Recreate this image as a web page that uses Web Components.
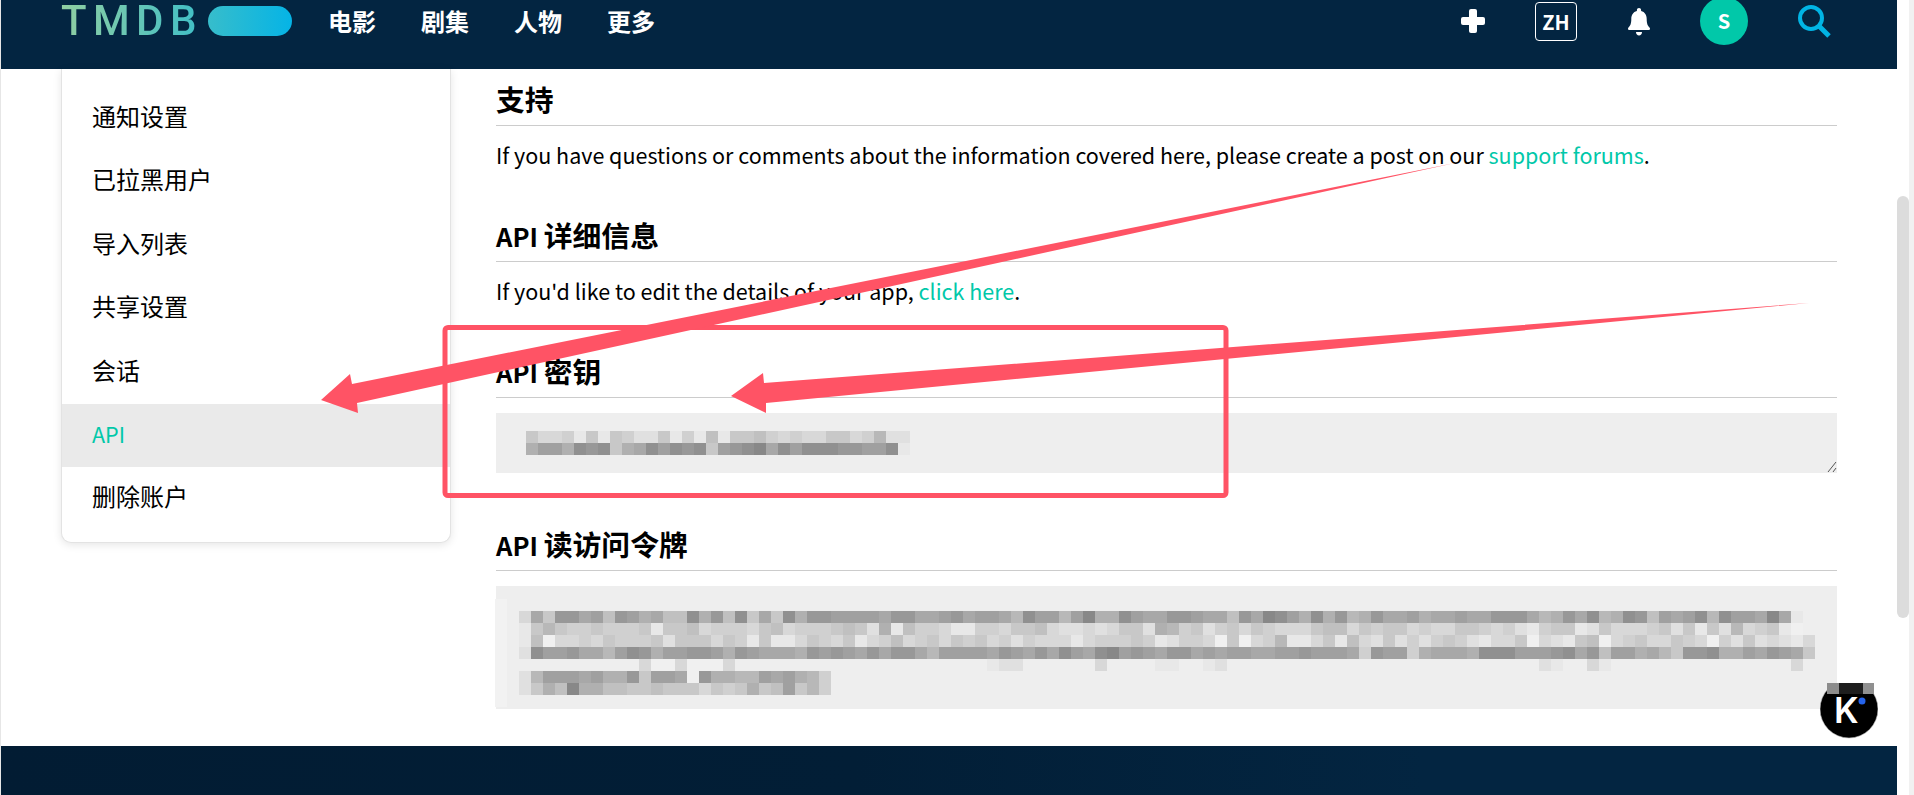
<!DOCTYPE html>
<html lang="zh">
<head>
<meta charset="utf-8">
<title>API</title>
<style>
html, body {
  margin: 0;
  padding: 0;
  height: 100%;
  overflow: hidden;
  background: white;
  font-family: "Noto Sans CJK SC", "Noto Sans", sans-serif;
}
</style>
</head>
<body>
<app-shell>
  <tmdb-header></tmdb-header>
  <page-main>
    <settings-sidebar slot="side">
      <side-item>通知设置</side-item>
      <side-item>已拉黑用户</side-item>
      <side-item>导入列表</side-item>
      <side-item>共享设置</side-item>
      <side-item>会话</side-item>
      <side-item active>API</side-item>
      <side-item>删除账户</side-item>
    </settings-sidebar>
    <api-section title="支持">
      <info-line lang="en">If you have questions or comments about the information covered here, please create a post on our <link-text>support forums</link-text>.</info-line>
    </api-section>
    <api-section title="API 详细信息">
      <info-line lang="en">If you'd like to edit the details of your app, <link-text>click here</link-text>.</info-line>
    </api-section>
    <api-section title="API 密钥">
      <key-box data-h="60" data-kind="key"></key-box>
    </api-section>
    <api-section title="API 读访问令牌">
      <key-box data-h="123" data-kind="token"></key-box>
    </api-section>
  </page-main>
  <page-footer></page-footer>
</app-shell>
<fake-scrollbar></fake-scrollbar>
<kit-badge></kit-badge>
<arrow-layer></arrow-layer>

<script>
const shellTemplate = document.createElement("template");
shellTemplate.innerHTML = `
<style>
:host {
  display: flex;
  flex-direction: column;
  position: absolute;
  left: 0;
  top: 0;
  width: 1897px;
  height: 795px;
  box-sizing: border-box;
  border-left: 1px solid #e6e6e6;
  overflow: hidden;
}
</style>
<slot></slot>
`;

class AppShell extends HTMLElement {
  constructor() {
    super();
    this.attachShadow({ mode: "open" }).append(shellTemplate.content.cloneNode(true));
  }
}
customElements.define("app-shell", AppShell);

const headerTemplate = document.createElement("template");
headerTemplate.innerHTML = `
<style>
:host {
  display: block;
  flex: none;
  height: 69px;
  background: #032541;
  overflow: hidden;
}
.row {
  height: 42px;
  padding: 0 66px 0 60px;
  display: flex;
  align-items: center;
  justify-content: space-between;
}
.left, .right {
  display: flex;
  align-items: center;
}
.logo {
  display: flex;
  align-items: center;
  margin-right: 36px;
}
.word {
  flex: none;
  width: 147px;
  font: 500 42px/42px Roboto, "Liberation Sans", sans-serif;
  letter-spacing: 6.4px;
  background: linear-gradient(90deg, #90cea1, #3cbec9);
  -webkit-background-clip: text;
  background-clip: text;
  color: transparent;
}
.pill {
  width: 84px;
  height: 30px;
  border-radius: 15px;
  background: linear-gradient(90deg, #37bdcb, #05b4e6);
}
nav {
  display: flex;
  gap: 45px;
  color: white;
  font-size: 24px;
  font-weight: 700;
  line-height: 30px;
}
.right {
  gap: 50px;
}
.lang {
  box-sizing: border-box;
  width: 42px;
  height: 39px;
  margin-right: 1px;
  border: 1px solid #fff;
  border-radius: 4px;
  color: white;
  font-size: 20px;
  font-weight: 700;
  line-height: 37px;
  text-align: center;
}
.avatar {
  width: 48px;
  height: 48px;
  flex: none;
  border-radius: 50%;
  background: #01c8a9;
  color: white;
  font-size: 20px;
  font-weight: 700;
  line-height: 48px;
  text-align: center;
}
svg {
  display: block;
  flex: none;
}
</style>
<div class="row">
  <div class="left">
    <div class="logo"><span class="word">TMDB</span><span class="pill"></span></div>
    <nav><span>电影</span><span>剧集</span><span>人物</span><span>更多</span></nav>
  </div>
  <div class="right">
    <svg width="24" height="24" viewBox="0 0 24 24"><rect x="8" y="0" width="8" height="24" rx="2" fill="#fff"/><rect x="0" y="8" width="24" height="8" rx="2" fill="#fff"/></svg>
    <span class="lang">ZH</span>
    <svg width="22" height="28" viewBox="0 0 22 28" style="margin-top:1px"><path d="M11 0c1.2 0 2.1.9 2.1 2v.9c3.8.9 5.6 4.1 5.6 8 0 5.3 1.2 6.9 3 8.8.3.3.3.7.3 1 0 .8-.6 1.4-1.5 1.4H1.500c-.9 0-1.500-.6-1.500-1.400 0-.3 0-.7.300-1 1.800-1.900 3-3.500 3-8.800 0-3.900 1.800-7.100 5.600-8V2c0-1.100.9-2 2.100-2z" fill="#fff"/><path d="M8 24h6c0 2.200-1.300 3.500-3 3.500S8 26.200 8 24z" fill="#fff"/></svg>
    <span class="avatar">S</span>
    <svg width="33" height="33" viewBox="0 0 33 33"><circle cx="13" cy="13" r="11" fill="none" stroke="#01b4e4" stroke-width="4"/><path d="M21.500 21.500L31 31" stroke="#01b4e4" stroke-width="5" fill="none"/></svg>
  </div>
</div>
`;

class TmdbHeader extends HTMLElement {
  constructor() {
    super();
    this.attachShadow({ mode: "open" }).append(headerTemplate.content.cloneNode(true));
  }
}
customElements.define("tmdb-header", TmdbHeader);

const mainTemplate = document.createElement("template");
mainTemplate.innerHTML = `
<style>
:host {
  display: flex;
  flex: none;
  align-items: flex-start;
  gap: 45px;
  padding: 0 60px 37px 60px;
  background: white;
}
.content {
  flex: 1;
  min-width: 0;
  padding-top: 9px;
}
</style>
<slot name="side"></slot>
<div class="content"><slot></slot></div>
`;

class PageMain extends HTMLElement {
  constructor() {
    super();
    this.attachShadow({ mode: "open" }).append(mainTemplate.content.cloneNode(true));
  }
}
customElements.define("page-main", PageMain);

const sidebarTemplate = document.createElement("template");
sidebarTemplate.innerHTML = `
<style>
:host {
  display: block;
  flex: none;
  box-sizing: border-box;
  width: 390px;
  padding: 18px 0 11px;
  background: white;
  border: 1px solid #e3e3e3;
  border-top: 0;
  border-radius: 0 0 10px 10px;
  box-shadow: 0 2px 8px rgba(0, 0, 0, 0.1);
}
</style>
<slot></slot>
`;

class SettingsSidebar extends HTMLElement {
  constructor() {
    super();
    this.attachShadow({ mode: "open" }).append(sidebarTemplate.content.cloneNode(true));
  }
}
customElements.define("settings-sidebar", SettingsSidebar);

const sideItemTemplate = document.createElement("template");
sideItemTemplate.innerHTML = `
<style>
:host {
  display: block;
  height: 63.4px;
  padding-left: 30px;
  font-size: 24px;
  line-height: 58px;
  color: #000;
}
:host([active]) {
  background: #eaeaea;
  color: #01c8a9;
  font-size: 21.5px;
  line-height: 60px;
}
</style>
<slot></slot>
`;

class SideItem extends HTMLElement {
  constructor() {
    super();
    this.attachShadow({ mode: "open" }).append(sideItemTemplate.content.cloneNode(true));
  }
}
customElements.define("side-item", SideItem);

const sectionTemplate = document.createElement("template");
sectionTemplate.innerHTML = `
<style>
:host {
  display: block;
  margin-bottom: 42px;
}
:host(:last-child) {
  margin-bottom: 0;
}
h2 {
  margin: 0 0 15px;
  height: 47px;
  border-bottom: 1px solid #ccc;
  font-size: 28.8px;
  font-weight: 700;
  line-height: 42px;
  color: #000;
}
.lat {
  font-size: 25.6px;
}
</style>
<h2></h2>
<slot></slot>
`;

class ApiSection extends HTMLElement {
  constructor() {
    super();
    this.attachShadow({ mode: "open" }).append(sectionTemplate.content.cloneNode(true));
  }

  connectedCallback() {
    // latin part of the title is drawn smaller than the chinese part
    const title = this.getAttribute("title");
    const h2 = this.shadowRoot.querySelector("h2");
    const match = title.match(/^[A-Za-z]+ /);
    if (match) {
      const lat = document.createElement("span");
      lat.className = "lat";
      lat.textContent = match[0];
      h2.append(lat, title.slice(match[0].length));
    } else {
      h2.textContent = title;
    }
  }
}
customElements.define("api-section", ApiSection);

const lineTemplate = document.createElement("template");
lineTemplate.innerHTML = `
<style>
:host {
  display: block;
  height: 30px;
  margin-top: 16px;
  font-size: 21.5px;
  line-height: 26px;
  color: #000;
}
</style>
<slot></slot>
`;

class InfoLine extends HTMLElement {
  constructor() {
    super();
    this.attachShadow({ mode: "open" }).append(lineTemplate.content.cloneNode(true));
  }
}
customElements.define("info-line", InfoLine);

const linkTemplate = document.createElement("template");
// no whitespace round the slot, this one sits inside a line of text
linkTemplate.innerHTML = `<style>:host { display: inline; color: #01c8a9; }</style><slot></slot>`;

class LinkText extends HTMLElement {
  constructor() {
    super();
    this.attachShadow({ mode: "open" }).append(linkTemplate.content.cloneNode(true));
  }
}
customElements.define("link-text", LinkText);

// grey levels of the mosaic, one hex digit per 12px cell, "." is no cell
const mosaics = {
  key: {
    left: 30,
    top: 18,
    rows: [
      "8aa9c8c89bb8c9c7c8879a9aa88a96bb",
      "5335121854131218321 04 1 3 1 1 1 2 2 3 3 1 c",
    ],
  },
  token: {
    left: -1,
    top: 13,
    rows: [
      "e.",
      "e. a4822437235477152718481522333342244 3243346133630551344223447240135152652 4435443442224652416512734316133404c",
      "e. c86899899 98c887a999a87a99987 8b5c799 acc99a887abbaba88b569 8b98a89aaa8 77a89 88a9aa889a9bc988cb8aaa98b8c8b6a98cd",
      "e. c7daa9a899 98b888a89c8cca89a8ca97a98 a8 98a9b9aaaca999 89cb99ad8da96cca8c7ab 8b9b989bcaa8dabc87da98aa89ad9b8babca",
      "e. b133244631253322352344452323424 2246 3333423424134103234224 34334 4332333492 3395444511133321427335468221553423 48",
      "e. .......... addaddda.. .......... .........c bb......a. ...cc..cb. .......... .......... .....bc..a c......... ......a",
      "e. b63334355283 34d2556634356 9",
      "e. b8570557788788 8a89858738 69",
      "e.",
    ],
  },
};

const boxTemplate = document.createElement("template");
boxTemplate.innerHTML = `
<style>
:host {
  display: block;
  position: relative;
  box-sizing: border-box;
  background: #eee;
}
.grid {
  display: grid;
  grid-template-columns: repeat(110, 12px);
  grid-auto-rows: 12px;
  width: max-content;
}
.handle {
  position: absolute;
  right: 0;
  bottom: 0;
}
</style>
<div class="grid"></div>
<svg class="handle" width="10" height="12" viewBox="0 0 10 12"><path d="M1 11L9 1M6 11L9 7" stroke="#555" stroke-width="1" fill="none"/></svg>
`;

class KeyBox extends HTMLElement {
  constructor() {
    super();
    this.attachShadow({ mode: "open" }).append(boxTemplate.content.cloneNode(true));
  }

  connectedCallback() {
    const mosaic = mosaics[this.dataset.kind];
    this.style.height = this.dataset.h + "px";
    this.style.marginBottom = this.dataset.kind === "key" ? "50px" : "0";
    const grid = this.shadowRoot.querySelector(".grid");
    grid.style.marginLeft = mosaic.left + "px";
    this.style.paddingTop = mosaic.top + "px";
    if (this.dataset.kind === "token") {
      this.shadowRoot.querySelector(".handle").remove();
    }
    mosaic.rows.forEach((row) => {
      const cells = row.replace(/\s/g, "").padEnd(110, ".");
      for (const c of cells) {
        const cell = document.createElement("span");
        if (c !== ".") {
          const v = c === "e" ? 242 : 136 + parseInt(c, 16) * 8;
          cell.style.background = `rgb(${v},${v},${v})`;
        }
        grid.appendChild(cell);
      }
    });
  }
}
customElements.define("key-box", KeyBox);

const footerTemplate = document.createElement("template");
footerTemplate.innerHTML = `
<style>
:host {
  display: block;
  flex: 1;
  background: linear-gradient(90deg, #021c33 0%, #021e36 45%, #032541 75%, #032541 100%);
}
</style>
`;

class PageFooter extends HTMLElement {
  constructor() {
    super();
    this.attachShadow({ mode: "open" }).append(footerTemplate.content.cloneNode(true));
  }
}
customElements.define("page-footer", PageFooter);

const scrollTemplate = document.createElement("template");
scrollTemplate.innerHTML = `
<style>
:host {
  display: block;
  position: absolute;
  left: 1897px;
  top: 0;
  width: 17px;
  height: 795px;
  box-sizing: border-box;
  border-right: 5px solid #f1f1f1;
}
.thumb {
  width: 12px;
  height: 422px;
  margin-top: 196px;
  border-radius: 6px;
  background: #dcdcdc;
}
</style>
<div class="thumb"></div>
`;

class FakeScrollbar extends HTMLElement {
  constructor() {
    super();
    this.attachShadow({ mode: "open" }).append(scrollTemplate.content.cloneNode(true));
  }
}
customElements.define("fake-scrollbar", FakeScrollbar);

const kitTemplate = document.createElement("template");
kitTemplate.innerHTML = `
<style>
:host {
  display: block;
  position: absolute;
  left: 1820px;
  top: 683px;
  width: 58px;
  height: 56px;
}
svg {
  display: block;
}
text {
  font: 600 35px Inter, "Liberation Sans", sans-serif;
  fill: #fff;
}
</style>
<svg width="58" height="56" viewBox="0 0 58 56">
  <circle cx="29" cy="26" r="29" fill="#000" stroke="#bbb" stroke-width="0.6"/>
  <rect x="7" y="0" width="12" height="11" fill="#8c8c8c"/>
  <rect x="19" y="0" width="24" height="11" fill="#1e1e1e"/>
  <rect x="43" y="0" width="11" height="11" fill="#909090"/>
  <text x="14" y="40">K</text>
  <circle cx="42" cy="18" r="3.500" fill="#2563eb"/>
</svg>
`;

class KitBadge extends HTMLElement {
  constructor() {
    super();
    this.attachShadow({ mode: "open" }).append(kitTemplate.content.cloneNode(true));
  }
}
customElements.define("kit-badge", KitBadge);

const arrowTemplate = document.createElement("template");
arrowTemplate.innerHTML = `
<style>
:host {
  display: block;
  position: absolute;
  left: 0;
  top: 0;
  width: 1914px;
  height: 795px;
  pointer-events: none;
}
svg {
  display: block;
}
</style>
<svg width="1914" height="795" viewBox="0 0 1914 795">
  <rect x="445" y="327.500" width="781" height="168" rx="3" fill="none" stroke="#ff5365" stroke-width="5"/>
  <polygon fill="#ff5365" points="1455,163 357,403 358,413 321,400 350,374 352,384"/>
  <polygon fill="#ff5365" points="1809,303 766,403 766,413 731,396 763,373 764,383"/>
</svg>
`;

class ArrowLayer extends HTMLElement {
  constructor() {
    super();
    this.attachShadow({ mode: "open" }).append(arrowTemplate.content.cloneNode(true));
  }
}
customElements.define("arrow-layer", ArrowLayer);
</script>
</body>
</html>
